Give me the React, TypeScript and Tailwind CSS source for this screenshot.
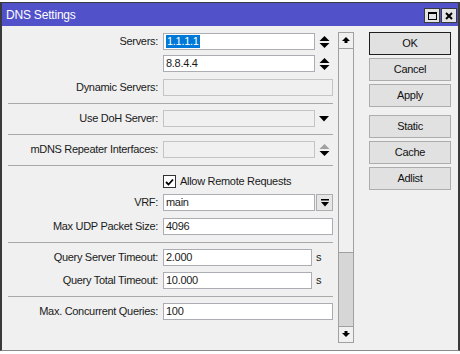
import React from 'react';

const font = { fontFamily: '"Liberation Sans", Arial, sans-serif' };

function Spinner({ dim = false }: { dim?: boolean }) {
  return (
    <svg width="11" height="12" viewBox="0 0 11 12">
      <path d="M0.5 5 L5.5 0 L10.5 5 Z" fill={dim ? '#a0a0a0' : '#000'} />
      <path d="M0.5 7 L5.5 12 L10.5 7 Z" fill="#000" />
    </svg>
  );
}

function Label({ children }: { children: React.ReactNode }) {
  return <div className="w-[156px] shrink-0 text-right">{children}</div>;
}

function Input({ value, w, children }: { value?: React.ReactNode; w: string; children?: React.ReactNode }) {
  return (
    <div className={`${w} h-[17px] shrink-0 border border-[#abadb3] bg-white pl-[2px] flex items-center leading-none`}>
      {value}
      {children}
    </div>
  );
}

function Disabled({ w }: { w: string }) {
  return <div className={`${w} h-[17px] shrink-0 border border-[#c4c4c4] bg-[#f0f0f0]`} />;
}

function Sep({ mt }: { mt: string }) {
  return <div className={`${mt} ml-[6px] w-[325px] h-px bg-[#a9a9a9]`} />;
}

function Row({ mt, label, children }: { mt: string; label: string; children: React.ReactNode }) {
  return (
    <div className={`${mt} flex items-center h-[17px]`}>
      <Label>{label}</Label>
      <div className="ml-[5px] flex items-center">{children}</div>
    </div>
  );
}

function ArrowBtn({ up }: { up?: boolean }) {
  return (
    <div className="h-[15px] flex items-center justify-center bg-[#f0f0f0]">
      <svg width="8" height="7" viewBox="0 0 8 7">
        {up ? (
          <path d="M0 4 L4 0 L8 4 L5.5 4 L5.5 6 L2.5 6 L2.5 4 Z" fill="#000" />
        ) : (
          <path d="M0 2 L4 6 L8 2 L5.5 2 L5.5 0 L2.5 0 L2.5 2 Z" fill="#000" />
        )}
      </svg>
    </div>
  );
}

function Btn({ children, mt, def }: { children: React.ReactNode; mt: string; def?: boolean }) {
  return (
    <div
      className={`${mt} ${def ? 'h-[23px] border-[#1f1f1f]' : 'h-[23px] border-[#adadad]'} border bg-[#e1e1e1] flex items-center justify-center text-[#111]`}
    >
      {children}
    </div>
  );
}

export default function App() {
  return (
    <div className="w-[460px] h-[354px] bg-white pt-[2px] overflow-hidden text-[11px] tracking-[-0.3px] text-[#1a1a1a]" style={font}>
      <div className="w-[460px] h-[349px] border-x-2 border-t border-[#3a3a3a] border-b border-b-[#8a8a8a] flex flex-col bg-[#f0f0f0]">
        {/* title bar */}
        <div className="h-[23px] shrink-0 bg-[#5151c9] flex items-center justify-between">
          <span className="ml-[4px] text-white text-[12px] tracking-[-0.2px]">DNS Settings</span>
          <div className="flex gap-[1px] mr-[1px] mt-[2px]">
            <div className="w-[16px] h-[15px] bg-[#e4e4e4] border border-[#3a3a3a] flex items-center justify-center">
              <div className="w-[9px] h-[8px] border border-black border-t-2" />
            </div>
            <div className="w-[16px] h-[15px] bg-[#e4e4e4] border border-[#3a3a3a] flex items-center justify-center">
              <svg width="8" height="8" viewBox="0 0 8 8">
                <path d="M1 1 L7 7 M7 1 L1 7" stroke="#000" strokeWidth="2" />
              </svg>
            </div>
          </div>
        </div>

        <div className="flex flex-1">
          {/* form */}
          <div className="w-[336px] shrink-0 flex flex-col pt-[7px]">
            <Row mt="mt-0" label="Servers:">
              <Input w="w-[152px]" value={<span className="bg-[#0078d7] text-white px-[1px] leading-[13px]">1.1.1.1</span>} />
              <div className="w-[18px] flex justify-center">
                <Spinner />
              </div>
            </Row>
            <Row mt="mt-[5px]" label="">
              <Input w="w-[152px]" value="8.8.4.4" />
              <div className="w-[18px] flex justify-center">
                <Spinner />
              </div>
            </Row>
            <Row mt="mt-[7px]" label="Dynamic Servers:">
              <Disabled w="w-[170px]" />
            </Row>
            <Sep mt="mt-[7px]" />
            <Row mt="mt-[6px]" label="Use DoH Server:">
              <Disabled w="w-[152px]" />
              <div className="w-[18px] flex justify-center">
                <svg width="10" height="6" viewBox="0 0 10 6">
                  <path d="M0 0 L10 0 L5 5.5 Z" fill="#000" />
                </svg>
              </div>
            </Row>
            <Sep mt="mt-[7px]" />
            <Row mt="mt-[6px]" label="mDNS Repeater Interfaces:">
              <Disabled w="w-[152px]" />
              <div className="w-[18px] flex justify-center">
                <Spinner dim />
              </div>
            </Row>
            <Sep mt="mt-[7px]" />
            <div className="mt-[9px] h-[13px] flex items-center">
              <div className="ml-[161px] w-[13px] h-[13px] border border-[#333] bg-white flex items-center justify-center">
                <svg width="9" height="8" viewBox="0 0 9 8">
                  <path d="M1 4 L3.5 6.5 L8 1.5" stroke="#000" strokeWidth="1.8" fill="none" />
                </svg>
              </div>
              <span className="ml-[4px]">Allow Remote Requests</span>
            </div>
            <Row mt="mt-[6px]" label="VRF:">
              <Input w="w-[152px]" value="main" />
              <div className="ml-px w-[17px] h-[17px] border border-[#adadad] bg-[#e6e6e6] flex items-center justify-center">
                <svg width="8" height="8" viewBox="0 0 8 8">
                  <rect x="0" y="0" width="8" height="1.5" fill="#000" />
                  <path d="M0 3 L8 3 L4 7.5 Z" fill="#000" />
                </svg>
              </div>
            </Row>
            <Row mt="mt-[7px]" label="Max UDP Packet Size:">
              <Input w="w-[170px]" value="4096" />
            </Row>
            <Sep mt="mt-[7px]" />
            <Row mt="mt-[6px]" label="Query Server Timeout:">
              <Input w="w-[149px]" value="2.000" />
              <span className="ml-[4px]">s</span>
            </Row>
            <Row mt="mt-[6px]" label="Query Total Timeout:">
              <Input w="w-[149px]" value="10.000" />
              <span className="ml-[4px]">s</span>
            </Row>
            <Sep mt="mt-[7px]" />
            <Row mt="mt-[6px]" label="Max. Concurrent Queries:">
              <Input w="w-[170px]" value="100" />
            </Row>
          </div>

          {/* scrollbar */}
          <div className="mt-[6px] w-[16px] h-[311px] shrink-0 border border-[#a0a0a0] bg-[#d6d6d6] flex flex-col">
            <ArrowBtn up />
            <div className="h-[205px] border-y border-[#a0a0a0] bg-[#f0f0f0]" />
            <div className="flex-1" />
            <div className="border-t border-[#a0a0a0]">
              <ArrowBtn />
            </div>
          </div>

          {/* buttons */}
          <div className="ml-[15px] w-[82px] shrink-0 flex flex-col pt-[6px]">
            <Btn mt="mt-0" def>OK</Btn>
            <Btn mt="mt-[3px]">Cancel</Btn>
            <Btn mt="mt-[3px]">Apply</Btn>
            <Btn mt="mt-[8px]">Static</Btn>
            <Btn mt="mt-[3px]">Cache</Btn>
            <Btn mt="mt-[3px]">Adlist</Btn>
          </div>
        </div>
      </div>
    </div>
  );
}
